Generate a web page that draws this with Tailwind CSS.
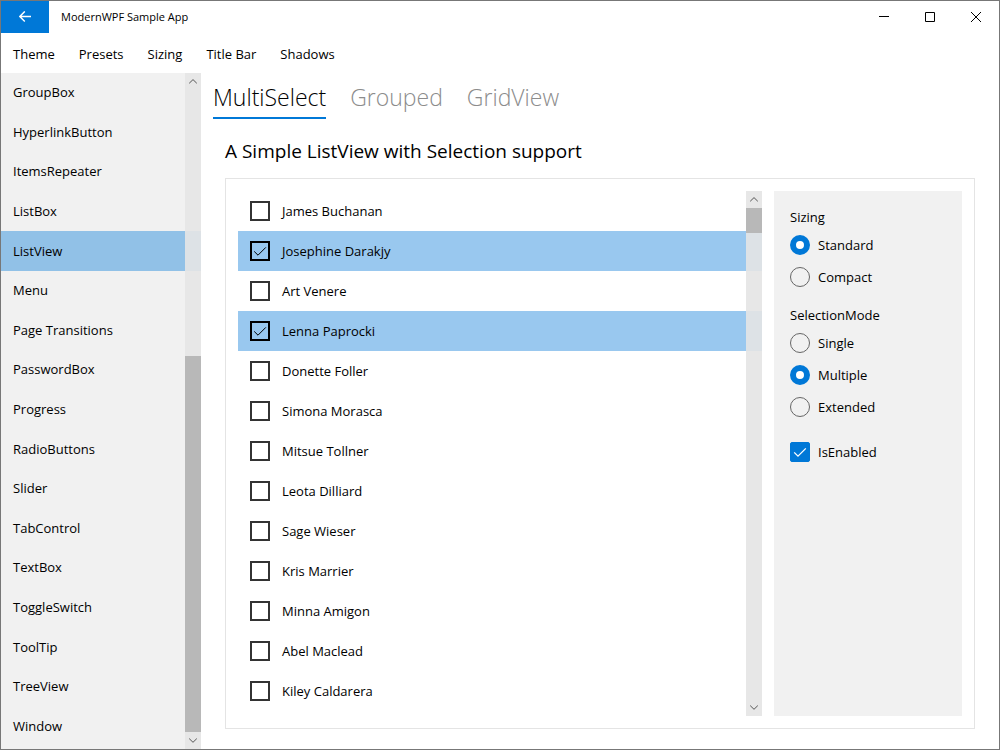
<!DOCTYPE html>
<html lang="en">
<head>
<meta charset="utf-8">
<meta name="viewport" content="width=device-width, initial-scale=1">
<title>ModernWPF Sample App</title>
<script src="https://cdn.jsdelivr.net/npm/@tailwindcss/browser@4"></script>
</head>
<body class="flex h-screen flex-col overflow-hidden border border-[#777] bg-white font-['Open_Sans','Noto_Sans',sans-serif] text-[13px] leading-5 text-black">
<svg class="hidden">
  <symbol id="up" viewBox="0 0 8 5"><path d="M0.2 4.3 4 0.6 7.8 4.3" fill="none" stroke="#555"/></symbol>
  <symbol id="down" viewBox="0 0 8 5"><path d="M0.2 0.6 4 4.3 7.8 0.6" fill="none" stroke="#555"/></symbol>
  <symbol id="tick" viewBox="0 0 20 20"><path d="M4.2 10.4 8 14.2 15.8 6.4" fill="none" stroke="currentColor"/></symbol>
</svg>

<header class="flex h-8 shrink-0 items-center">
  <button type="button" aria-label="Back" class="grid h-8 w-12 place-items-center bg-[#0078d7] text-white">
    <svg class="h-3 w-3" viewBox="0 0 12 12" fill="none" stroke="currentColor" stroke-width="1.4"><path d="M12 5.5H.8M5.8 .4.8 5.5 5.8 10.6"/></svg>
  </button>
  <h1 class="ml-3 flex-1 text-[11px]">ModernWPF Sample App</h1>
  <button type="button" aria-label="Minimize" class="grid h-8 w-[46px] place-items-center"><svg class="h-[10px] w-[10px]" viewBox="0 0 10 10"><path d="M0 4.5H10" stroke="#000"/></svg></button>
  <button type="button" aria-label="Maximize" class="grid h-8 w-[46px] place-items-center"><svg class="h-[10px] w-[10px]" viewBox="0 0 10 10"><path d="M.5.5h9v9h-9z" fill="none" stroke="#000"/></svg></button>
  <button type="button" aria-label="Close" class="grid h-8 w-[46px] place-items-center"><svg class="h-[10px] w-[10px]" viewBox="0 0 10 10"><path d="M0 0 10 10M10 0 0 10" stroke="#000"/></svg></button>
</header>

<nav aria-label="Menu bar" class="flex h-10 shrink-0 items-center gap-6 px-3 pt-0.5">
  <button type="button">Theme</button>
  <button type="button">Presets</button>
  <button type="button">Sizing</button>
  <button type="button">Title Bar</button>
  <button type="button">Shadows</button>
</nav>

<div class="flex min-h-0 flex-1">
  <aside class="relative flex w-[200px] shrink-0 bg-[#f1f1f1]">
    <nav aria-label="Controls" class="flex flex-1 flex-col pb-[3px] [&>a]:flex [&>a]:min-h-0 [&>a]:flex-1 [&>a]:items-center [&>a]:px-3 [&>a]:pb-px">
      <a href="#groupbox">GroupBox</a>
      <a href="#hyperlinkbutton">HyperlinkButton</a>
      <a href="#itemsrepeater">ItemsRepeater</a>
      <a href="#listbox">ListBox</a>
      <a href="#listview" aria-current="page" class="bg-[#91c1e7]">ListView</a>
      <a href="#menu">Menu</a>
      <a href="#page-transitions">Page Transitions</a>
      <a href="#passwordbox">PasswordBox</a>
      <a href="#progress">Progress</a>
      <a href="#radiobuttons">RadioButtons</a>
      <a href="#slider">Slider</a>
      <a href="#tabcontrol">TabControl</a>
      <a href="#textbox">TextBox</a>
      <a href="#toggleswitch">ToggleSwitch</a>
      <a href="#tooltip">ToolTip</a>
      <a href="#treeview">TreeView</a>
      <a href="#window">Window</a>
    </nav>
    <div class="absolute inset-y-0 right-0 flex w-4 flex-col bg-[#e5e5e5]/90">
      <button type="button" aria-label="Scroll up" class="grid h-[17px] place-items-center"><svg class="h-[5px] w-2"><use href="#up"/></svg></button>
      <div class="flex flex-1 flex-col justify-end"><div class="bg-[#b8b8b8]" style="height:58.5%"></div></div>
      <button type="button" aria-label="Scroll down" class="grid h-[17px] place-items-center"><svg class="h-[5px] w-2"><use href="#down"/></svg></button>
    </div>
  </aside>

  <main class="flex min-w-0 flex-1 flex-col">
    <div role="tablist" class="flex gap-6 px-3 pt-1.5 text-[23px] leading-9 font-light text-[#8c8c8c]">
      <button type="button" role="tab" aria-selected="true" class="border-b-2 border-[#0078d7] pb-0.5 text-black">MultiSelect</button>
      <button type="button" role="tab" aria-selected="false" class="border-b-2 border-transparent pb-0.5">Grouped</button>
      <button type="button" role="tab" aria-selected="false" class="border-b-2 border-transparent pb-0.5">GridView</button>
    </div>
    <section class="flex min-h-0 flex-1 flex-col px-6 pt-[18px] pb-5">
      <h2 class="mb-[13px] text-[19px] leading-7">A Simple ListView with Selection support</h2>
      <div class="flex min-h-0 flex-1 gap-3 border border-[#e4e4e4] p-3">
        <div class="relative min-w-0 flex-1 overflow-hidden">
          <div class="[&>label]:flex [&>label]:h-10 [&>label]:items-center [&>label]:gap-3 [&>label]:px-3 [&>label:has(:checked)]:bg-[#99c8ef] [&_input]:col-start-1 [&_input]:row-start-1 [&_input]:size-5 [&_input]:appearance-none [&_input]:border-2 [&_input]:border-[#333] [&_input:checked]:border-black [&_span]:grid [&_svg]:pointer-events-none [&_svg]:col-start-1 [&_svg]:row-start-1 [&_svg]:hidden [&_svg]:size-5 [&_input:checked+svg]:block">
            <label><span><input type="checkbox"><svg><use href="#tick"/></svg></span>James Buchanan</label>
            <label><span><input type="checkbox" checked><svg><use href="#tick"/></svg></span>Josephine Darakjy</label>
            <label><span><input type="checkbox"><svg><use href="#tick"/></svg></span>Art Venere</label>
            <label><span><input type="checkbox" checked><svg><use href="#tick"/></svg></span>Lenna Paprocki</label>
            <label><span><input type="checkbox"><svg><use href="#tick"/></svg></span>Donette Foller</label>
            <label><span><input type="checkbox"><svg><use href="#tick"/></svg></span>Simona Morasca</label>
            <label><span><input type="checkbox"><svg><use href="#tick"/></svg></span>Mitsue Tollner</label>
            <label><span><input type="checkbox"><svg><use href="#tick"/></svg></span>Leota Dilliard</label>
            <label><span><input type="checkbox"><svg><use href="#tick"/></svg></span>Sage Wieser</label>
            <label><span><input type="checkbox"><svg><use href="#tick"/></svg></span>Kris Marrier</label>
            <label><span><input type="checkbox"><svg><use href="#tick"/></svg></span>Minna Amigon</label>
            <label><span><input type="checkbox"><svg><use href="#tick"/></svg></span>Abel Maclead</label>
            <label><span><input type="checkbox"><svg><use href="#tick"/></svg></span>Kiley Caldarera</label>
          </div>
          <div class="absolute inset-y-0 right-0 flex w-4 flex-col bg-[#e4e4e4]/90">
            <button type="button" aria-label="Scroll up" class="grid h-[17px] place-items-center"><svg class="h-[5px] w-2"><use href="#up"/></svg></button>
            <div class="flex-1"><div class="bg-[#b8b8b8]" style="height:5.1%"></div></div>
            <button type="button" aria-label="Scroll down" class="grid h-[17px] place-items-center"><svg class="h-[5px] w-2"><use href="#down"/></svg></button>
          </div>
        </div>

        <form class="flex w-[188px] shrink-0 flex-col gap-[18px] bg-[#f1f1f1] p-4 [&_input]:size-5 [&_input]:appearance-none [&_input[type=radio]]:rounded-full [&_input[type=radio]]:border [&_input[type=radio]]:border-[#666] [&_input[type=radio]:checked]:border-[6px] [&_input[type=radio]:checked]:border-[#0078d7] [&_input[type=radio]:checked]:bg-white [&_label]:flex [&_label]:items-center [&_label]:gap-2">
          <fieldset class="flex flex-col gap-3">
            <legend class="mb-2 leading-5">Sizing</legend>
            <label><input type="radio" name="sizing" checked>Standard</label>
            <label><input type="radio" name="sizing">Compact</label>
          </fieldset>
          <fieldset class="flex flex-col gap-3">
            <legend class="mb-2 leading-5">SelectionMode</legend>
            <label><input type="radio" name="mode">Single</label>
            <label><input type="radio" name="mode" checked>Multiple</label>
            <label><input type="radio" name="mode">Extended</label>
          </fieldset>
          <label class="pt-[7px]"><span class="grid text-white"><input type="checkbox" checked class="col-start-1 row-start-1 rounded-xs border border-[#666] checked:border-[#0078d7] checked:bg-[#0078d7]"><svg class="pointer-events-none col-start-1 row-start-1 size-5"><use href="#tick" stroke-width="1.3"/></svg></span>IsEnabled</label>
        </form>
      </div>
    </section>
  </main>
</div>
</body>
</html>
